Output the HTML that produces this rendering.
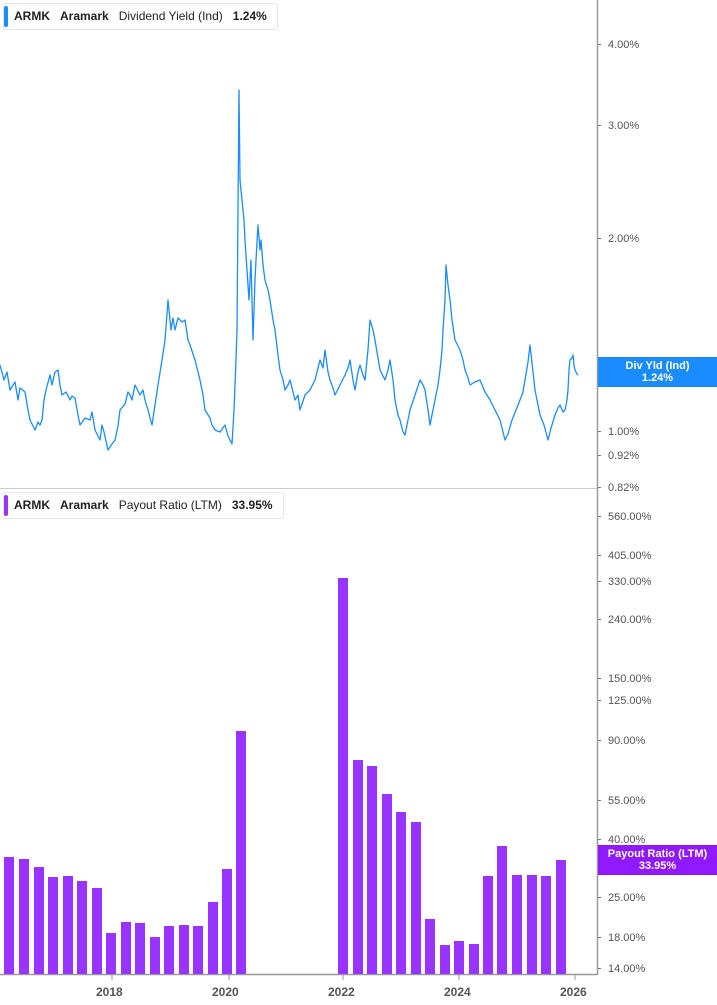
<!DOCTYPE html>
<html><head><meta charset="utf-8"><style>
*{margin:0;padding:0;box-sizing:border-box}
body{width:717px;height:1005px;background:#fff;font-family:"Liberation Sans",sans-serif;position:relative;overflow:hidden}
.leg{position:absolute;left:3px;height:27px;background:#fff;border:1px solid #e6e6e6;border-radius:3px;font-size:12px;font-weight:bold;color:#222;line-height:25px;padding-left:10px;white-space:nowrap}
.leg:before{content:"";position:absolute;left:0;top:2px;bottom:2px;width:4px;border-radius:2px;background:var(--c)}
.leg span{margin-right:10px}
.lab{position:absolute;left:608px;font-size:11px;color:#555}
.tk{position:absolute;left:598px;width:3px;height:1px;background:#777}
.tag{position:absolute;left:598px;width:119px;color:#fff;font-size:11px;font-weight:bold;text-align:center;line-height:12px;padding-top:3px}
.xl{position:absolute;top:985px;font-size:12px;font-weight:bold;color:#555}
</style></head><body>
<svg width="717" height="1005" style="position:absolute;left:0;top:0">
<line x1="597.5" y1="0" x2="597.5" y2="975" stroke="#999" stroke-width="1.5"/>
<line x1="0" y1="488.5" x2="597" y2="488.5" stroke="#ccc"/>
<line x1="0" y1="974.5" x2="597" y2="974.5" stroke="#999" stroke-width="1.5"/>
<g stroke="#999"><line x1="112" y1="975" x2="112" y2="980"/><line x1="229" y1="975" x2="229" y2="980"/><line x1="343" y1="975" x2="343" y2="980"/><line x1="459" y1="975" x2="459" y2="980"/><line x1="575" y1="975" x2="575" y2="980"/></g>
<polyline fill="none" stroke="#1a8cff" stroke-width="1.3" stroke-linejoin="round" points="0,365 4,380 7,372 10,390 15,382 18,400 20,388 25,392 28,410 30,420 35,430 38,422 40,425 42,420 44,400 46,390 50,375 52,385 55,372 58,370 60,385 62,395 66,392 70,400 72,396 75,398 78,415 80,425 85,418 90,420 92,412 95,430 100,440 102,425 104,432 108,450 112,444 115,440 118,426 120,410 125,404 128,392 130,395 132,400 135,385 140,395 143,390 145,400 148,410 150,418 152,425 155,405 158,385 162,360 165,340 168,300 171,330 173,318 175,330 178,318 182,322 185,320 188,340 190,345 195,360 198,372 200,380 203,395 205,410 210,418 212,425 215,430 220,432 225,425 228,436 230,440 232,444 234,410 236,360 237,330 239,90 240,180 242,200 244,220 245,240 247,270 249,300 251,260 253,340 255,280 256,260 258,225 260,250 261,240 263,265 265,280 268,290 270,300 273,320 275,330 278,355 280,370 283,380 285,390 288,385 290,380 293,392 295,400 298,395 300,410 305,395 310,390 315,380 320,360 323,368 325,350 328,372 330,380 333,388 335,395 340,385 345,375 348,368 350,360 353,380 355,390 358,372 360,365 363,375 365,380 368,350 370,320 373,330 375,340 378,358 380,370 383,376 385,380 388,370 390,360 393,380 395,400 398,415 400,420 403,432 405,435 408,420 410,410 415,395 420,380 423,385 425,390 428,410 430,425 433,410 435,400 438,385 440,370 442,350 443,330 445,300 446,265 448,285 450,300 452,320 455,340 458,346 460,350 463,360 465,370 468,378 470,385 475,382 480,380 485,392 490,400 495,410 500,420 503,432 505,440 508,434 512,420 516,410 520,400 523,392 525,380 528,362 530,345 533,372 535,390 538,405 540,415 544,425 548,440 551,428 555,415 558,408 560,405 563,412 565,410 567,400 568,390 569,370 570,360 572,358 573,355 574,365 575,370 577,374 578,375"/>
<g fill="#9933ff">
<rect x="4" y="857" width="10" height="117"/><rect x="19" y="859" width="10" height="115"/><rect x="34" y="867" width="10" height="107"/><rect x="48" y="877" width="10" height="97"/><rect x="63" y="876" width="10" height="98"/><rect x="77" y="881" width="10" height="93"/><rect x="92" y="888" width="10" height="86"/><rect x="106" y="933" width="10" height="41"/><rect x="121" y="922" width="10" height="52"/><rect x="135" y="923" width="10" height="51"/><rect x="150" y="937" width="10" height="37"/><rect x="164" y="926" width="10" height="48"/><rect x="179" y="925" width="10" height="49"/><rect x="193" y="926" width="10" height="48"/><rect x="208" y="902" width="10" height="72"/><rect x="222" y="869" width="10" height="105"/><rect x="236" y="731" width="10" height="243"/>
<rect x="338" y="578" width="10" height="396"/><rect x="353" y="760" width="10" height="214"/><rect x="367" y="766" width="10" height="208"/><rect x="382" y="794" width="10" height="180"/><rect x="396" y="812" width="10" height="162"/><rect x="411" y="822" width="10" height="152"/><rect x="425" y="919" width="10" height="55"/><rect x="440" y="945" width="10" height="29"/><rect x="454" y="941" width="10" height="33"/><rect x="469" y="944" width="10" height="30"/><rect x="483" y="876" width="10" height="98"/><rect x="497" y="846" width="10" height="128"/><rect x="512" y="875" width="10" height="99"/><rect x="527" y="875" width="10" height="99"/><rect x="541" y="876" width="10" height="98"/><rect x="556" y="860" width="10" height="114"/>
</g>
</svg>
<div class="leg" style="top:3px;--c:#1a8cff"><span>ARMK</span><span>Aramark</span><span style="font-weight:normal">Dividend Yield (Ind)</span><span>1.24%</span></div>
<div class="leg" style="top:492px;--c:#9933ff"><span>ARMK</span><span>Aramark</span><span style="font-weight:normal">Payout Ratio (LTM)</span><span>33.95%</span></div>

<div class="tk" style="top:44px"></div><div class="lab" style="top:39px">4.00%</div>
<div class="tk" style="top:125px"></div><div class="lab" style="top:120px">3.00%</div>
<div class="tk" style="top:238px"></div><div class="lab" style="top:233px">2.00%</div>
<div class="tk" style="top:431px"></div><div class="lab" style="top:426px">1.00%</div>
<div class="tk" style="top:455px"></div><div class="lab" style="top:450px">0.92%</div>
<div class="tk" style="top:487px"></div><div class="lab" style="top:482px">0.82%</div>
<div class="tk" style="top:516px"></div><div class="lab" style="top:511px">560.00%</div>
<div class="tk" style="top:555px"></div><div class="lab" style="top:550px">405.00%</div>
<div class="tk" style="top:581px"></div><div class="lab" style="top:576px">330.00%</div>
<div class="tk" style="top:619px"></div><div class="lab" style="top:614px">240.00%</div>
<div class="tk" style="top:678px"></div><div class="lab" style="top:673px">150.00%</div>
<div class="tk" style="top:700px"></div><div class="lab" style="top:695px">125.00%</div>
<div class="tk" style="top:740px"></div><div class="lab" style="top:735px">90.00%</div>
<div class="tk" style="top:800px"></div><div class="lab" style="top:795px">55.00%</div>
<div class="tk" style="top:839px"></div><div class="lab" style="top:834px">40.00%</div>
<div class="tk" style="top:897px"></div><div class="lab" style="top:892px">25.00%</div>
<div class="tk" style="top:937px"></div><div class="lab" style="top:932px">18.00%</div>
<div class="tk" style="top:968px"></div><div class="lab" style="top:963px">14.00%</div>

<div class="tag" style="top:357px;height:30px;background:#1a8cff">Div Yld (Ind)<br>1.24%</div>
<div class="tag" style="top:845px;height:30px;background:#9019ff">Payout Ratio (LTM)<br>33.95%</div>

<div class="xl" style="left:96px">2018</div>
<div class="xl" style="left:212px">2020</div>
<div class="xl" style="left:328px">2022</div>
<div class="xl" style="left:444px">2024</div>
<div class="xl" style="left:560px">2026</div>
</body></html>
